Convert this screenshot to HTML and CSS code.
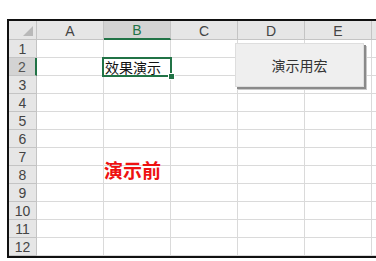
FILE: index.html
```html
<!DOCTYPE html>
<html lang="zh">
<head>
<meta charset="utf-8">
<title>Sheet</title>
<link rel="stylesheet" href="styles.css">
</head>
<body>
<div class="sheet">
  <div class="grid">
    <div class="hd corner"><svg class="tri" width="10" height="10" viewBox="0 0 10 10"><polygon points="10,0 10,10 0,10" fill="#b9b9b9"/></svg></div>
    <div class="hd col">A</div>
    <div class="hd col sel-col">B</div>
    <div class="hd col">C</div>
    <div class="hd col">D</div>
    <div class="hd col">E</div>
    <div class="hd col"></div>

    <div class="hd row">1</div><div class="c"></div><div class="c"></div><div class="c"></div><div class="c"></div><div class="c"></div><div class="c"></div>
    <div class="hd row sel-row">2</div><div class="c"></div><div class="c txt">效果演示</div><div class="c"></div><div class="c"></div><div class="c"></div><div class="c"></div>
    <div class="hd row">3</div><div class="c"></div><div class="c"></div><div class="c"></div><div class="c"></div><div class="c"></div><div class="c"></div>
    <div class="hd row">4</div><div class="c"></div><div class="c"></div><div class="c"></div><div class="c"></div><div class="c"></div><div class="c"></div>
    <div class="hd row">5</div><div class="c"></div><div class="c"></div><div class="c"></div><div class="c"></div><div class="c"></div><div class="c"></div>
    <div class="hd row">6</div><div class="c"></div><div class="c"></div><div class="c"></div><div class="c"></div><div class="c"></div><div class="c"></div>
    <div class="hd row">7</div><div class="c"></div><div class="c"></div><div class="c"></div><div class="c"></div><div class="c"></div><div class="c"></div>
    <div class="hd row">8</div><div class="c"></div><div class="c big"><span>演示前</span></div><div class="c"></div><div class="c"></div><div class="c"></div><div class="c"></div>
    <div class="hd row">9</div><div class="c"></div><div class="c"></div><div class="c"></div><div class="c"></div><div class="c"></div><div class="c"></div>
    <div class="hd row">10</div><div class="c"></div><div class="c"></div><div class="c"></div><div class="c"></div><div class="c"></div><div class="c"></div>
    <div class="hd row">11</div><div class="c"></div><div class="c"></div><div class="c"></div><div class="c"></div><div class="c"></div><div class="c"></div>
    <div class="hd row">12</div><div class="c"></div><div class="c"></div><div class="c"></div><div class="c"></div><div class="c"></div><div class="c"></div>
  </div>
  <div class="selbox"><div class="handle"></div></div>
  <div class="macro-btn">演示用宏</div>
</div>
</body>
</html>
```

FILE: styles.css
```css
html, body {
  margin: 0;
  padding: 0;
  background: #ffffff;
}
body {
  width: 376px;
  height: 261px;
  overflow: hidden;
  font-family: "Liberation Sans", "Noto Sans CJK SC", sans-serif;
}
.sheet {
  position: relative;
  margin: 19px 0 0 7px;
  width: 369px;
  border-top: 2px solid #111;
  border-left: 2px solid #111;
  border-bottom: 2px solid #111;
  overflow: hidden;
}
.grid {
  display: grid;
  grid-template-columns: 28px repeat(6, 67px);
  grid-template-rows: 19px repeat(12, 18px);
}
.hd {
  background: #e6e6e6;
  color: #444;
  font-size: 14px;
  box-sizing: border-box;
  border-right: 1px solid #c4c4c4;
  border-bottom: 1px solid #c4c4c4;
  display: flex;
  align-items: center;
  justify-content: center;
  line-height: 1;
}
.corner {
  position: relative;
  align-items: flex-end;
  justify-content: flex-end;
  padding: 0 3px 3px 0;
}
.col {
  padding-top: 1px;
}
.row {
  font-size: 14px;
  padding-top: 1px;
}
.sel-col {
  background: #d3d3d3;
  color: #217346;
  border-bottom: 2px solid #217346;
}
.sel-row {
  background: #d3d3d3;
  color: #555;
  border-right: 2px solid #217346;
}
.c {
  box-sizing: border-box;
  border-right: 1px solid #dadada;
  border-bottom: 1px solid #dadada;
  display: flex;
  align-items: center;
  white-space: nowrap;
  overflow: visible;
}
.txt {
  font-family: "Noto Sans CJK SC", sans-serif;
  font-size: 14px;
  color: #111;
  padding-left: 1px;
  padding-top: 1px;
}
.big {
  font-family: "Noto Sans CJK SC", sans-serif;
  font-size: 19px;
  font-weight: 700;
  color: #ee1111;
  line-height: 18px;
  padding-left: 0;
}
.big span {
  margin-bottom: 10px;
}
.selbox {
  position: absolute;
  left: 93px;
  top: 36px;
  width: 70px;
  height: 20px;
  box-sizing: border-box;
  border: 2px solid #217346;
}
.handle {
  position: absolute;
  right: -5px;
  bottom: -5px;
  width: 5px;
  height: 5px;
  background: #217346;
  border: 1px solid #fff;
}
.macro-btn {
  position: absolute;
  left: 226px;
  top: 22px;
  width: 129px;
  height: 44px;
  box-sizing: border-box;
  background: #efefef;
  border: 1px solid #dedede;
  box-shadow: 2px 2px 0 #8a8a8a, 3px 3px 0 #c8c8c8;
  display: flex;
  align-items: center;
  justify-content: center;
  font-family: "Noto Sans CJK SC", sans-serif;
  font-size: 14px;
  color: #333;
}
```
